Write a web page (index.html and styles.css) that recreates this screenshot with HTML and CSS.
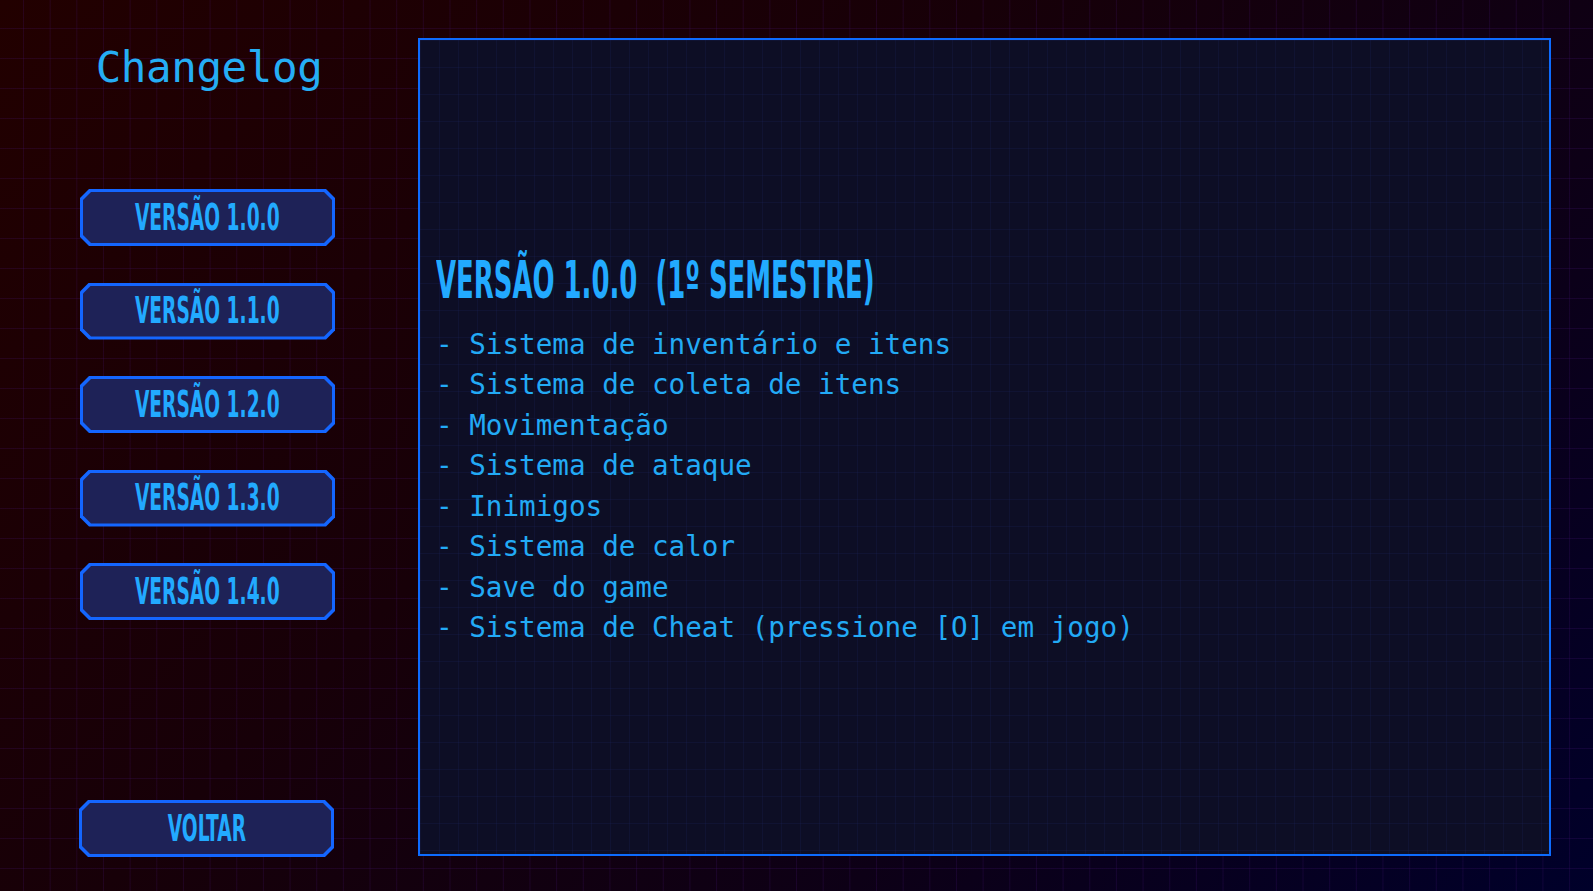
FILE: index.html
```html
<!DOCTYPE html>
<html lang="pt">
<head>
<meta charset="utf-8">
<title>Changelog</title>
<link rel="stylesheet" href="styles.css">
</head>
<body>
<div class="screen">
  <aside class="sidebar">
    <h1 class="title">Changelog</h1>
    <nav class="versions">
      <button class="btn"><span class="lbl">VERSÃO 1.0.0</span></button>
      <button class="btn"><span class="lbl">VERSÃO 1.1.0</span></button>
      <button class="btn"><span class="lbl">VERSÃO 1.2.0</span></button>
      <button class="btn"><span class="lbl">VERSÃO 1.3.0</span></button>
      <button class="btn"><span class="lbl">VERSÃO 1.4.0</span></button>
    </nav>
    <button class="btn btn-back"><span class="lbl">VOLTAR</span></button>
  </aside>
  <main class="panel">
    <div class="content">
      <h2 class="heading"><span class="heading-text">VERSÃO 1.0.0&nbsp;&nbsp;(1º SEMESTRE)</span></h2>
      <ul class="list">
        <li>- Sistema de inventário e itens</li>
        <li>- Sistema de coleta de itens</li>
        <li>- Movimentação</li>
        <li>- Sistema de ataque</li>
        <li>- Inimigos</li>
        <li>- Sistema de calor</li>
        <li>- Save do game</li>
        <li>- Sistema de Cheat (pressione [O] em jogo)</li>
      </ul>
    </div>
  </main>
</div>
</body>
</html>
```

FILE: styles.css
```css
html, body {
  margin: 0;
  padding: 0;
  width: 1593px;
  height: 891px;
  overflow: hidden;
}

body {
  background-color: #120012;
  background-image:
    linear-gradient(to right, rgba(70, 20, 120, 0.22) 1px, transparent 1px),
    linear-gradient(to bottom, rgba(70, 20, 120, 0.22) 1px, transparent 1px),
    linear-gradient(135deg, #220000 0%, #170008 40%, #0d0016 70%, #00002a 100%);
  background-size: 26.67px 30px, 26.67px 30px, 100% 100%;
  background-position: 23px 28px, 23px 28px, 0 0;
}

.screen {
  display: flex;
  height: 891px;
  box-sizing: border-box;
  padding: 38px 42px 35px 0;
}

.sidebar {
  width: 418px;
  flex: none;
  display: flex;
  flex-direction: column;
  align-items: center;
}

.title {
  margin: 6px 0 0 0;
  font-family: "DejaVu Sans Mono", monospace;
  font-weight: normal;
  font-size: 42.5px;
  line-height: 48px;
  color: #25aef5;
  letter-spacing: -0.4px;
}

.versions {
  margin-top: 97px;
  margin-right: 3px;
  display: flex;
  flex-direction: column;
  gap: 36.5px;
}

.btn {
  position: relative;
  width: 255px;
  height: 57px;
  border: none;
  padding: 0;
  background: #1466ff;
  clip-path: polygon(9px 0, calc(100% - 9px) 0, 100% 9px, 100% calc(100% - 9px), calc(100% - 9px) 100%, 9px 100%, 0 calc(100% - 9px), 0 9px);
  display: flex;
  align-items: center;
  justify-content: center;
  isolation: isolate;
}

.btn::before {
  content: "";
  position: absolute;
  inset: 3px;
  background: #1e2257;
  clip-path: polygon(8px 0, calc(100% - 8px) 0, 100% 8px, 100% calc(100% - 8px), calc(100% - 8px) 100%, 8px 100%, 0 calc(100% - 8px), 0 8px);
  z-index: -1;
}

.lbl {
  display: inline-block;
  font-family: "DejaVu Sans Condensed", "DejaVu Sans", sans-serif;
  font-weight: bold;
  font-size: 37px;
  line-height: 40px;
  color: #22aaff;
  white-space: nowrap;
  transform: scaleX(0.56);
}

.btn-back {
  margin-top: auto;
  margin-right: 5px;
  margin-bottom: -1px;
}

.panel {
  flex: 1;
  border: 2px solid #0d6bff;
  background-color: #0d0e25;
  background-image:
    linear-gradient(to right, rgba(30, 40, 100, 0.2) 1px, transparent 1px),
    linear-gradient(to bottom, rgba(30, 40, 100, 0.2) 1px, transparent 1px);
  background-size: 19px 27px, 19px 27px;
  display: flex;
  flex-direction: column;
  justify-content: center;
  padding: 0 16px;
}

.content {
  margin-top: 6px;
}

.heading {
  margin: 0 0 15px 0;
  font-family: "DejaVu Sans Condensed", "DejaVu Sans", sans-serif;
  font-weight: bold;
  font-size: 51px;
  line-height: 58px;
  color: #22aaff;
  white-space: nowrap;
}

.heading-text {
  display: inline-block;
  transform: scaleX(0.565);
  transform-origin: 0 50%;
}

.list {
  list-style: none;
  margin: 0;
  padding: 0;
  font-family: "DejaVu Sans Mono", monospace;
  font-size: 27.6px;
  line-height: 40.5px;
  color: #22aaf5;
}
```
